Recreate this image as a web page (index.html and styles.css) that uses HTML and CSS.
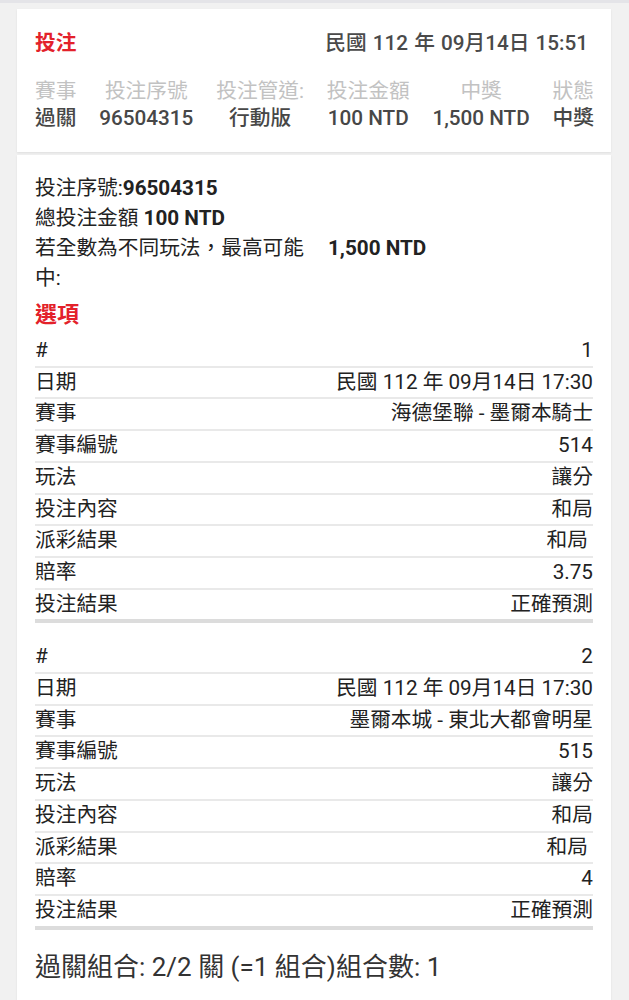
FILE: index.html
```html
<!DOCTYPE html>
<html lang="zh-Hant">
<head>
    <meta charset="UTF-8">
    <title>投注明細</title>
    <link rel="stylesheet" href="styles.css">
</head>

<body>
<div class="page">
    <!--投注摘要-->
    <div class="card summary">
        <div class="summary-head">
            <span class="title">投注</span>
            <span class="time">民國 112 年 09月14日 15:51</span>
        </div>
        <div class="summary-cols">
            <div class="col">
                <div class="col-label">賽事</div>
                <div class="col-value">過關</div>
            </div>
            <div class="col">
                <div class="col-label">投注序號</div>
                <div class="col-value">96504315</div>
            </div>
            <div class="col">
                <div class="col-label">投注管道:</div>
                <div class="col-value">行動版</div>
            </div>
            <div class="col">
                <div class="col-label">投注金額</div>
                <div class="col-value">100 NTD</div>
            </div>
            <div class="col">
                <div class="col-label">中獎</div>
                <div class="col-value">1,500 NTD</div>
            </div>
            <div class="col">
                <div class="col-label">狀態</div>
                <div class="col-value">中獎</div>
            </div>
        </div>
    </div>

    <!--投注明細-->
    <div class="card detail">
        <div class="line">投注序號:<b>96504315</b></div>
        <div class="line">總投注金額 <b>100 NTD</b></div>
        <div class="line max">
            <span class="max-label">若全數為不同玩法，最高可能中:</span>
            <b>1,500 NTD</b>
        </div>
        <div class="section">選項</div>

        <table class="leg">
            <tr><td>#</td><td>1</td></tr>
            <tr><td>日期</td><td>民國 112 年 09月14日 17:30</td></tr>
            <tr><td>賽事</td><td>海德堡聯 - 墨爾本騎士</td></tr>
            <tr><td>賽事編號</td><td>514</td></tr>
            <tr><td>玩法</td><td>讓分</td></tr>
            <tr><td>投注內容</td><td>和局</td></tr>
            <tr><td>派彩結果</td><td class="result">和局</td></tr>
            <tr><td>賠率</td><td>3.75</td></tr>
            <tr><td>投注結果</td><td>正確預測</td></tr>
        </table>

        <table class="leg">
            <tr><td>#</td><td>2</td></tr>
            <tr><td>日期</td><td>民國 112 年 09月14日 17:30</td></tr>
            <tr><td>賽事</td><td>墨爾本城 - 東北大都會明星</td></tr>
            <tr><td>賽事編號</td><td>515</td></tr>
            <tr><td>玩法</td><td>讓分</td></tr>
            <tr><td>投注內容</td><td>和局</td></tr>
            <tr><td>派彩結果</td><td class="result">和局</td></tr>
            <tr><td>賠率</td><td>4</td></tr>
            <tr><td>投注結果</td><td>正確預測</td></tr>
        </table>

        <div class="combo">過關組合: 2/2 關 (=1 組合)組合數: 1</div>
    </div>
</div>
</body>
</html>
```

FILE: styles.css
```css
html,
body {
    margin: 0;
    padding: 0;
}
body {
    background: #f1f1f1;
    border-top: 3px solid #e4e4e8;
    font-family: Roboto, "Noto Sans CJK TC", sans-serif;
    font-size: 20.7px;
    color: #222;
}
.page {
    padding: 6px 18px 0 17px;
}
.card {
    background: #fff;
    box-shadow: 0 1px 2px rgba(0, 0, 0, 0.08);
}

/*摘要*/
.summary {
    padding: 18px 17px 20px 18px;
}
.summary-head {
    display: flex;
    justify-content: space-between;
    line-height: 32px;
}
.title {
    color: #e3212a;
    font-weight: bold;
}
.time {
    color: #4a4a4a;
    font-weight: 500;
    padding-right: 6px;
    word-spacing: 1px;
}
.summary-cols {
    display: flex;
    justify-content: space-between;
    margin-top: 18px;
    text-align: center;
}
.col-label {
    color: #c2c2c2;
    line-height: 28px;
}
.col-value {
    color: #474747;
    font-weight: 500;
    line-height: 27px;
}

/*明細*/
.detail {
    margin-top: 3px;
    padding: 18px 18px 40px 18px;
    min-height: 860px;
}
.line {
    line-height: 30px;
    color: #222;
}
.line b {
    font-weight: bold;
}
.max {
    display: flex;
    gap: 18px;
}
.max-label {
    width: 275px;
}
.section {
    color: #e3212a;
    font-size: 22px;
    font-weight: bold;
    line-height: 43px;
}
.leg {
    width: 100%;
    border-collapse: collapse;
    margin-bottom: 19px;
}
.leg td {
    padding: 0;
    line-height: 29.7px;
    border-bottom: 2px solid #e9e9e9;
    white-space: nowrap;
}
.leg td + td {
    text-align: right;
}
.leg td.result {
    padding-right: 5px;
}
.leg tr:last-child td {
    border-bottom: 4px solid #dcdcdc;
}
.combo {
    font-size: 26px;
    color: #333;
    line-height: 36px;
    margin-top: 8px;
}
```
